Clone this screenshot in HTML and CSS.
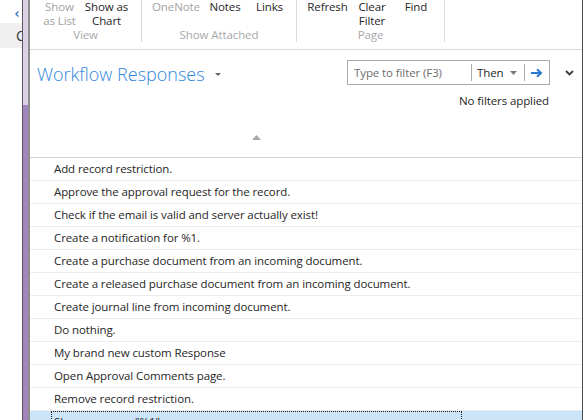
FILE: index.html
```html
<!DOCTYPE html>
<html>
<head>
<meta charset="utf-8">
<link rel="stylesheet" href="styles.css">
</head>
<body>
<div class="side">
  <div class="side-top">
    <svg class="back" width="4" height="6" viewBox="0 0 4 6"><polyline points="3.5,0.5 0.8,3 3.5,5.5" fill="none" stroke="#2b6fc6" stroke-width="1.2"/></svg>
  </div>
  <div class="side-box"><span class="side-letter">C</span></div>
</div>
<div class="rail"></div>
<div class="scroll"><div class="track"></div><div class="thumb"></div></div>
<div class="rail-edge"></div>
<div class="window">
  <div class="ribbon">
    <div class="group g-view">
      <div class="btns">
        <div class="btn dis w43">Show<br>as List</div>
        <div class="btn w51">Show as<br>Chart</div>
      </div>
      <div class="glabel">View</div>
    </div>
    <div class="group g-attached">
      <div class="btns">
        <div class="btn dis w47">OneNote</div>
        <div class="btn w52">Notes</div>
        <div class="btn w37">Links</div>
      </div>
      <div class="glabel">Show Attached</div>
    </div>
    <div class="group g-page">
      <div class="btns">
        <div class="btn w45">Refresh</div>
        <div class="btn w44">Clear<br>Filter</div>
        <div class="btn w44">Find</div>
      </div>
      <div class="glabel">Page</div>
    </div>
  </div>
  <div class="header">
    <div class="title-row">
      <div class="title">Workflow Responses</div>
      <svg class="caret" width="6" height="3" viewBox="0 0 6 3"><polygon points="0,0 6,0 3,3" fill="#606060"/></svg>
      <div class="spacer"></div>
      <div class="filter">
        <div class="ftext">Type to filter (F3)</div>
        <div class="fsep"></div>
        <div class="then"><span>Then</span><svg width="7" height="4" viewBox="0 0 7 4"><polygon points="0,0 7,0 3.5,4" fill="#7a7a7a"/></svg></div>
        <div class="fsep"></div>
        <div class="go"><svg width="12" height="10" viewBox="0 0 12 10"><path d="M0 5 H10 M6 1.2 L10 5 L6 8.8" fill="none" stroke="#2b78cf" stroke-width="2"/></svg></div>
      </div>
      <div class="more"><svg width="9" height="6" viewBox="0 0 9 6"><polyline points="1,1 4.5,4.5 8,1" fill="none" stroke="#3c3c3c" stroke-width="1.8"/></svg></div>
    </div>
    <div class="nofilter">No filters applied</div>
    <div class="sort"><svg width="9" height="5" viewBox="0 0 9 5"><polygon points="0,5 9,5 4.5,0" fill="#a8a8a8"/></svg></div>
  </div>
  <div class="list">
    <div class="row"><div class="cell">Add record restriction.</div></div>
    <div class="row"><div class="cell">Approve the approval request for the record.</div></div>
    <div class="row"><div class="cell">Check if the email is valid and server actually exist!</div></div>
    <div class="row"><div class="cell">Create a notification for %1.</div></div>
    <div class="row"><div class="cell">Create a purchase document from an incoming document.</div></div>
    <div class="row"><div class="cell">Create a released purchase document from an incoming document.</div></div>
    <div class="row"><div class="cell">Create journal line from incoming document.</div></div>
    <div class="row"><div class="cell">Do nothing.</div></div>
    <div class="row"><div class="cell">My brand new custom Response</div></div>
    <div class="row"><div class="cell">Open Approval Comments page.</div></div>
    <div class="row"><div class="cell">Remove record restriction.</div></div>
    <div class="row selected"><div class="cell">Show message "%1".</div></div>
  </div>
</div>
</body>
</html>
```
FILE: styles.css
```css
* { box-sizing: border-box; }
html, body { margin: 0; padding: 0; background: #fff; }
body {
  width: 584px;
  height: 420px;
  overflow: hidden;
  display: flex;
  align-items: stretch;
  font-family: "Open Sans", "Noto Sans", sans-serif;
  font-size: 11.5px;
  letter-spacing: -0.1px;
  color: #262626;
}

/* left strip of the underlying window */
.side { width: 22px; height: 420px; flex: none; display: flex; flex-direction: column; }
.side-top { height: 23px; flex: none; padding: 11px 0 0 15px; }
.back { display: block; }
.side-box { height: 25px; flex: none; background: #f0f0f0; overflow: hidden; padding-left: 16px; white-space: nowrap; }
.side-letter { font-size: 14px; line-height: 25px; color: #333; }
.rail { width: 1px; height: 420px; flex: none; background: #5a5560; }
.scroll { width: 5px; height: 420px; flex: none; display: flex; flex-direction: column; background: #a285bd; }
.track { height: 105px; flex: none; background: #ddd1e8; }
.thumb { flex: 1; background: #a285bd; }
.rail-edge { width: 2px; height: 420px; flex: none; background: #8e8e8e; }

/* main window */
.window { width: 553px; height: 420px; flex: none; border-right: 1px solid #4c4c4c; display: flex; flex-direction: column; overflow: hidden; }

.ribbon { height: 50px; flex: none; border-bottom: 1px solid #d8d8d8; display: flex; align-items: flex-start; }
.group { height: 42px; border-right: 1px solid #dadada; display: flex; flex-direction: column; }
.g-view { width: 112px; padding-left: 8px; }
.g-attached { width: 155px; padding-left: 10px; }
.g-page { width: 148px; padding-left: 8px; }
.btns { height: 31px; display: flex; }
.btn { text-align: center; line-height: 14px; white-space: nowrap; color: #262626; }
.btn.dis { color: #a3a3a3; }
.w37 { width: 37px; } .w43 { width: 43px; } .w44 { width: 44px; } .w45 { width: 45px; }
.w47 { width: 47px; } .w51 { width: 51px; } .w52 { width: 52px; }
.glabel { line-height: 14px; color: #a8a8a8; text-align: center; margin-left: -8px; }
.g-attached .glabel { margin-left: -10px; }

.header { height: 108px; flex: none; border-bottom: 1px solid #d4d4d4; display: flex; flex-direction: column; }
.title-row { margin-top: 10px; height: 25px; display: flex; align-items: center; padding: 0 8px 0 7px; }
.title { font-size: 18px; font-weight: 300; letter-spacing: 0; line-height: 25px; padding-top: 3px; color: #2f86de; }
.caret { margin-left: 10px; margin-top: 3px; }
.spacer { flex: 1; }
.filter { width: 203px; height: 25px; border: 1px solid #a9a9a9; display: flex; align-items: center; }
.ftext { width: 123px; padding-left: 6px; color: #6e6e6e; }
.fsep { width: 1px; height: 17px; background: #a9a9a9; }
.then { width: 52px; display: flex; align-items: center; justify-content: space-between; padding: 0 7px 0 5px; }
.go { flex: 1; display: flex; justify-content: center; align-items: center; }
.go svg, .more svg, .caret, .sort svg { display: block; }
.more { width: 24px; display: flex; justify-content: flex-end; }
.nofilter { margin-top: 8px; line-height: 15px; text-align: right; padding-right: 33px; }
.sort { margin-top: 27px; padding-left: 222px; }

.list { flex: none; }
.row { height: 23px; border-bottom: 1px solid #ececec; padding-left: 21px; }
.cell { width: 411px; height: 22px; line-height: 20px; padding-left: 2px; border: 1px solid transparent; white-space: nowrap; }
.row.selected { background: #cce4f7; border-bottom: none; }
.row.selected .cell { border: 1px dotted #1a1a1a; }
```
